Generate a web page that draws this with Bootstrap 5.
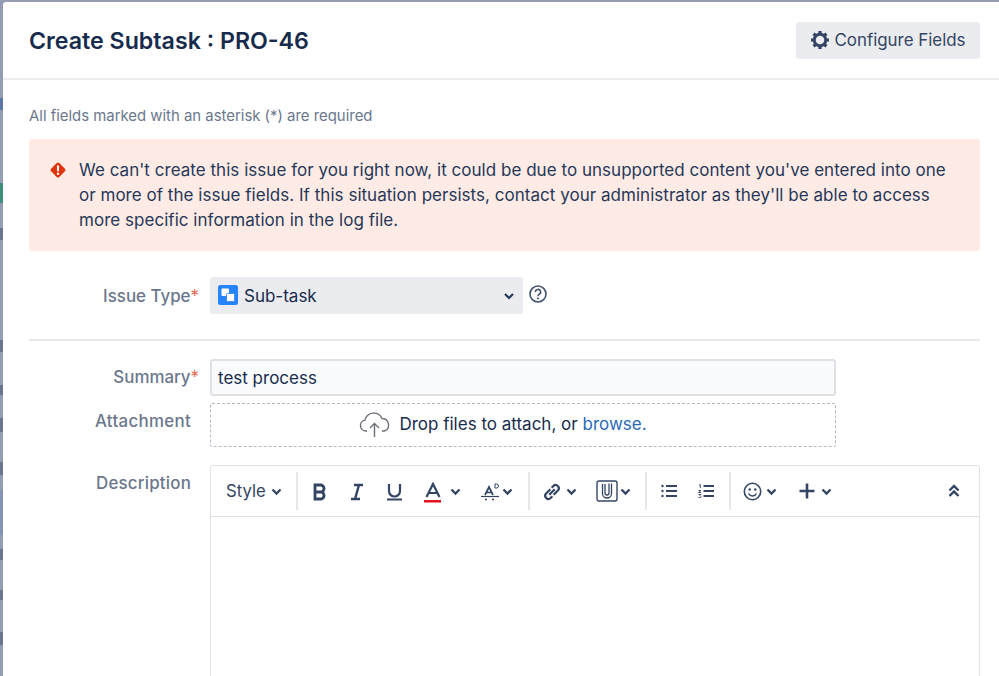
<!DOCTYPE html>
<html lang="en"><head><meta charset="utf-8"><title>Create Subtask</title>
<link rel="stylesheet" href="https://cdn.jsdelivr.net/npm/bootstrap@5.3.0/dist/css/bootstrap.min.css">
<style>
html,body{height:676px;overflow:hidden}
body{font-family:Inter,"Liberation Sans",sans-serif;background:#959db2;color:#172b4d;padding:2px 0 0 0;font-size:17px;display:flex}
.bgstrip{width:3px;flex:none;height:676px;margin-top:-2px;background:linear-gradient(#959db2 0 98px,#5c77ab 98px 110px,#959db2 110px 183px,#3f8d7c 183px 203px,#959db2 203px 228px,#6a7690 228px 240px,#959db2 240px 340px,#6a7690 340px 352px,#959db2 352px 385px,#6a7690 385px 395px,#959db2 395px 418px,#6a7690 418px 432px,#959db2 432px 462px,#6a7690 462px 475px,#959db2 475px 490px,#8593b5 490px 535px,#959db2 535px 549px,#6a7690 549px 560px,#959db2 560px 590px,#6a7690 590px 600px,#959db2 600px 632px,#6a7690 632px 645px,#959db2 645px)}
.dlg{background:#fff;height:674px;flex:1;min-width:0;border-radius:3px 0 0 0;overflow:hidden;position:relative}
.dlg-head{height:76px;border-bottom:2px solid #ebecf0;box-sizing:content-box;padding:0 19px 0 26px}
.dlg-title{font-size:23.200px;font-weight:600;color:#172b4d;margin:4px 0 0}
.cfg-btn{background:#ebecf0;color:#344563;border:0;height:37px;width:184px;border-radius:3px;font-size:16.900px;padding:0}
.cfg-btn span{position:relative;top:1px}
.dlg-body{padding:0 19px 0 26px}
.hint{color:#6b778c;font-size:14.900px;margin:27px 0 14px;line-height:18px}
.err-box{background:#ffebe6;border-radius:3px;height:112px;padding:19px 20px 0 50px;line-height:25px;color:#253858;font-size:17px;letter-spacing:.03px;position:relative;margin:0 0 26px}
.err-ico{position:absolute;left:20px;top:22px}
.frow{display:flex}
.flabel{width:181px;flex:none;text-align:right;color:#6b778c;font-weight:500;font-size:16.900px;padding-right:19px}
.flabel.has-req{padding-right:11px}
.lab-type{padding-top:2px}
.lab-sum{padding-top:6px}
.lab-att{padding-top:13px;letter-spacing:.3px}
.lab-desc{padding-top:24px;letter-spacing:.2px}
.req{color:#de6a50;font-weight:400}
.fake-sel{width:313px;height:37px;background:#ebecf0;border-radius:3px;padding:0 7px}
.sel-txt{position:relative;top:1px}
.sel-ico{margin:-1px 6px 0 1px}
.sel-chev{margin-right:2px}
.help-ico{margin:-3px 0 0 5px}
.divline{border-top:2px solid #e6e7eb;margin:25px 0 18px;opacity:1}
.fake-inp{width:626px;height:37px;background:#fafbfc;border:2px solid #dfe1e6;border-radius:3px;padding:2px 6px 0;color:#172b4d;font-size:17px}
.drop{width:626px;height:44px;border:1px dashed #b3b9c4;border-radius:2px;margin-top:7px;color:#172b4d;font-size:17px;padding-right:40px}
.drop a{color:#2a6ab5;text-decoration:none}
.editor{flex:1;height:300px;border:1px solid #dfe1e6;border-radius:3px 3px 0 0;margin-top:18px}
.tbar{height:51px;border-bottom:1px solid #dfe1e6;color:#344563;position:relative}
.tbar svg{position:absolute}
.tsep{position:absolute;top:6px;width:2px;height:38px;background:#e6e7eb}
.tstyle{position:absolute;left:15px;top:15px;font-size:16.700px;line-height:20px;color:#344563}
</style></head><body>
<div class="bgstrip"></div>
<div class="dlg">
 <div class="dlg-head d-flex align-items-center justify-content-between">
  <h2 class="dlg-title">Create Subtask : PRO-46</h2>
  <button class="cfg-btn d-flex align-items-center justify-content-center gap-1">
   <svg width="20" height="20" viewBox="0 0 20 20"><circle cx="10" cy="10" r="5.800" fill="none" stroke="#344563" stroke-width="3"/><g stroke="#344563" stroke-width="3.200"><path d="M10 1v3M10 16v3M1 10h3M16 10h3M3.600 3.600l2.100 2.100M14.300 14.300l2.100 2.100M3.600 16.400l2.100-2.100M14.300 5.700l2.100-2.100"/></g></svg>
   <span>Configure Fields</span></button>
 </div>
 <div class="dlg-body">
  <p class="hint">All fields marked with an asterisk (*) are required</p>
  <div class="err-box">
   <svg class="err-ico" width="18" height="18" viewBox="0 0 18 18"><rect x="3.200" y="3.200" width="11.600" height="11.600" rx="1.800" fill="#de350b" transform="rotate(45 9 9)"/><rect x="8" y="4.300" width="2" height="6.300" rx="1" fill="#fff"/><circle cx="9" cy="12.800" r="1.200" fill="#fff"/></svg>
   We can't create this issue for you right now, it could be due to unsupported content you've entered into one or more of the issue fields. If this situation persists, contact your administrator as they'll be able to access more specific information in the log file.
  </div>
  <div class="frow align-items-center">
   <div class="flabel has-req lab-type">Issue Type<span class="req">*</span></div>
   <div class="fake-sel d-flex align-items-center">
    <svg class="sel-ico" width="20" height="20" viewBox="0 0 20 20"><rect width="20" height="20" rx="2.500" fill="#2684ff"/><rect x="3.500" y="3.500" width="7.500" height="7.500" rx="1" fill="#fff"/><rect x="8.500" y="8.500" width="8" height="8" rx="1" fill="#fff" stroke="#2684ff" stroke-width=".8"/></svg>
    <span class="sel-txt">Sub-task</span>
    <svg class="ms-auto sel-chev" width="10" height="8" viewBox="0 0 10 8"><path d="M1 2l4 4 4-4" fill="none" stroke="#253858" stroke-width="2.200"/></svg>
   </div>
   <svg class="help-ico" width="20" height="20" viewBox="0 0 20 20"><circle cx="10" cy="10" r="8" fill="none" stroke="#42526e" stroke-width="1.600"/><path d="M7.400 8a2.600 2.600 0 1 1 3.800 2.300c-.8.500-1.200.9-1.200 1.900" fill="none" stroke="#42526e" stroke-width="1.600"/><circle cx="10" cy="14.500" r="1" fill="#42526e"/></svg>
  </div>
  <hr class="divline">
  <div class="frow">
   <div class="flabel has-req lab-sum">Summary<span class="req">*</span></div>
   <div class="fake-inp d-flex align-items-center">test process</div>
  </div>
  <div class="frow">
   <div class="flabel lab-att">Attachment</div>
   <div class="drop d-flex align-items-center justify-content-center gap-2">
    <svg width="32" height="26" viewBox="0 0 32 26"><path d="M8 19H6.500A5.500 5.500 0 0 1 6 8.100 9 9 0 0 1 23 6.500a6.500 6.500 0 0 1 2.500 12.500H23" fill="none" stroke="#6b6f76" stroke-width="1.400"/><path d="M15.500 25V12M11 16l4.500-4.500L20 16" fill="none" stroke="#6b6f76" stroke-width="1.400"/></svg>
    <span>Drop files to attach, or <a href="#">browse.</a></span>
   </div>
  </div>
  <div class="frow">
   <div class="flabel lab-desc">Description</div>
   <div class="editor">
    <div class="tbar">
     <span class="tstyle">Style</span>
     <svg style="left:60px;top:22px" width="11" height="8" viewBox="0 0 11 8"><path d="M1.500 1.500l4 4 4-4" fill="none" stroke="#344563" stroke-width="2.300"/></svg>
     <div class="tsep" style="left:85px"></div>
     <svg style="left:101px;top:17px" width="16" height="18" viewBox="0 0 16 18"><path d="M3 2h5.500a3.500 3.500 0 0 1 0 7H3zM3 9h6.500a3.700 3.700 0 0 1 0 7H3z" fill="none" stroke="#344563" stroke-width="2.800"/></svg>
     <svg style="left:138px;top:17px" width="16" height="18" viewBox="0 0 16 18"><path d="M5 2h9M2 16h9M10 2L6 16" fill="none" stroke="#344563" stroke-width="2.400"/></svg>
     <svg style="left:175px;top:17px" width="17" height="18" viewBox="0 0 17 18"><path d="M3 1v7a5.500 5.500 0 0 0 11 0V1M1 16.500h15" fill="none" stroke="#344563" stroke-width="2.200"/></svg>
     <svg style="left:212px;top:16px" width="20" height="22" viewBox="0 0 20 22"><path d="M3.500 15L10 2l6.500 13M5.500 11h9" fill="none" stroke="#344563" stroke-width="2.200"/><rect x="1" y="18" width="17" height="2.500" fill="#e5121f"/></svg>
     <svg style="left:239px;top:22px" width="11" height="8" viewBox="0 0 11 8"><path d="M1.500 1.500l4 4 4-4" fill="none" stroke="#344563" stroke-width="2.300"/></svg>
     <svg style="left:270px;top:16px" width="20" height="20" viewBox="0 0 20 20"><path d="M4 13l4-8 4 8M5 10.500h6" fill="none" stroke="#344563" stroke-width="1.700"/><path d="M0 14.500h18" stroke="#344563" stroke-width="1.200"/><path d="M4 17.500h2M11 17.500h2" stroke="#344563" stroke-width="1.500"/><path d="M14 2v4h1.500a2 2 0 0 0 0-4z" fill="none" stroke="#344563" stroke-width="1"/></svg>
     <svg style="left:291px;top:22px" width="11" height="8" viewBox="0 0 11 8"><path d="M1.500 1.500l4 4 4-4" fill="none" stroke="#344563" stroke-width="2.300"/></svg>
     <div class="tsep" style="left:317px"></div>
     <svg style="left:331px;top:16px" width="20" height="20" viewBox="0 0 18 18"><path d="M7.500 6.500l-3.800 3.800a2.900 2.900 0 0 0 4.100 4.100l1.500-1.500M10.500 11.500l3.800-3.800a2.900 2.900 0 0 0-4.100-4.100L8.700 5.100M6.500 11.500l5-5" fill="none" stroke="#344563" stroke-width="2"/></svg>
     <svg style="left:355px;top:22px" width="11" height="8" viewBox="0 0 11 8"><path d="M1.500 1.500l4 4 4-4" fill="none" stroke="#344563" stroke-width="2.300"/></svg>
     <svg style="left:385px;top:14px" width="22" height="22" viewBox="0 0 22 22"><rect x="1" y="1" width="20" height="20" rx="2" fill="none" stroke="#344563" stroke-width="1.400"/><path d="M6.500 4v9.500a4.500 4.500 0 0 0 9 0V3.500M9 4v9a2 2 0 0 0 4 0V3.500" fill="none" stroke="#344563" stroke-width="1.300"/></svg>
     <svg style="left:409px;top:22px" width="11" height="8" viewBox="0 0 11 8"><path d="M1.500 1.500l4 4 4-4" fill="none" stroke="#344563" stroke-width="2.300"/></svg>
     <div class="tsep" style="left:434px"></div>
     <svg style="left:450px;top:18px" width="16" height="14" viewBox="0 0 16 14"><path d="M5 2h11M5 7h11M5 12h11" stroke="#344563" stroke-width="2.200"/><circle cx="1.500" cy="2" r="1.200" fill="#344563"/><circle cx="1.500" cy="7" r="1.200" fill="#344563"/><circle cx="1.500" cy="12" r="1.200" fill="#344563"/></svg>
     <svg style="left:487px;top:18px" width="16" height="14" viewBox="0 0 16 14"><path d="M5.500 2h10.500M5.500 7h10.500M5.500 12h10.500" stroke="#344563" stroke-width="2.200"/><path d="M1 1l1.300-.5V4M.5 6.500h2.500l-2.500 2h2.500M.5 10.500h2.500l-1 1 1 1-.5 1h-2" fill="none" stroke="#344563" stroke-width=".9"/></svg>
     <div class="tsep" style="left:518px"></div>
     <svg style="left:532px;top:16px" width="19" height="19" viewBox="0 0 19 19"><circle cx="9.500" cy="9.500" r="8.200" fill="none" stroke="#344563" stroke-width="1.600"/><circle cx="6.700" cy="7.500" r="1.200" fill="#344563"/><circle cx="12.300" cy="7.500" r="1.200" fill="#344563"/><path d="M5.500 11.500a4.500 4.500 0 0 0 8 0" fill="none" stroke="#344563" stroke-width="1.500"/></svg>
     <svg style="left:555px;top:22px" width="11" height="8" viewBox="0 0 11 8"><path d="M1.500 1.500l4 4 4-4" fill="none" stroke="#344563" stroke-width="2.300"/></svg>
     <svg style="left:588px;top:17px" width="16" height="16" viewBox="0 0 16 16"><path d="M8 .5v15M.5 8h15" stroke="#344563" stroke-width="2.600"/></svg>
     <svg style="left:610px;top:22px" width="11" height="8" viewBox="0 0 11 8"><path d="M1.500 1.500l4 4 4-4" fill="none" stroke="#344563" stroke-width="2.300"/></svg>
     <svg style="left:737px;top:18px" width="12" height="14" viewBox="0 0 12 14"><path d="M1.500 6.500L6 2l4.500 4.500M1.500 12L6 7.500 10.500 12" fill="none" stroke="#344563" stroke-width="2.400"/></svg>
    </div>
   </div>
  </div>
 </div>
</div>
</body></html>
